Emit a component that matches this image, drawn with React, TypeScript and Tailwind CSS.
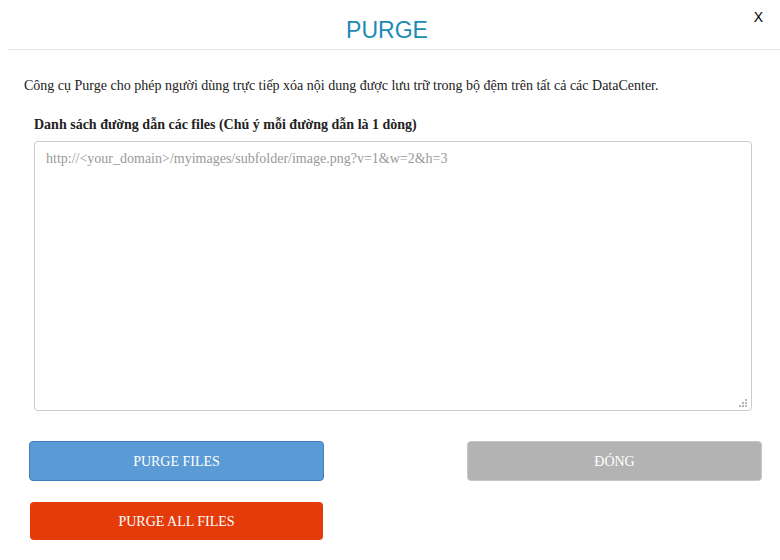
import React from 'react';

function Grip() {
  // dotted resize grip in the textarea corner
  const dots = [
    [6, 0], [6, 3], [3, 3], [6, 6], [3, 6], [0, 6],
  ];
  return (
    <svg className="absolute right-[5px] bottom-[4px] pointer-events-none" width="8" height="8" viewBox="0 0 8 8">
      {dots.map(([x, y], i) => (
        <rect key={i} x={x} y={y} width="2" height="2" fill="#b5b5b5" />
      ))}
    </svg>
  );
}

export default function App() {
  return (
    <div className="relative w-[780px] h-[560px] bg-white font-['Liberation_Serif',serif] text-[#333]">
      {/* header */}
      <div className="relative ml-2 h-[50px] border-b border-[#e5e5e5] flex justify-center pt-[16px]">
        <h2 className="font-['Liberation_Sans',Arial,sans-serif] text-[23px] leading-[28px] text-[#1a8bb5] pr-[14px]">PURGE</h2>
        <button className="absolute right-[17px] top-[8px] font-['Liberation_Sans',Arial,sans-serif] text-[14px] leading-[18px] text-black">
          X
        </button>
      </div>

      {/* body */}
      <div className="pt-[26px]">
        <p className="pl-6 text-[14px] leading-[20px] text-[#222]">
          Công cụ Purge cho phép người dùng trực tiếp xóa nội dung được lưu trữ trong bộ đệm trên tất cả các DataCenter.
        </p>

        <div className="pl-[34px] pr-[28px] mt-[19px]">
          <label className="block text-[14px] leading-[20px] font-bold text-[#222] mb-[6px]">
            Danh sách đường dẫn các files (Chú ý mỗi đường dẫn là 1 dòng)
          </label>
          <div className="relative w-[718px] h-[270px]">
            <textarea
              className="block w-full h-full resize-none border border-[#cccccc] rounded-[4px] px-[11px] py-[7px] text-[14px] leading-[20px] outline-none placeholder:text-[#999]"
              placeholder="http://<your_domain>/myimages/subfolder/image.png?v=1&w=2&h=3"
            />
            <Grip />
          </div>
        </div>

        <div className="flex justify-between pl-[29px] pr-[18px] mt-[30px]">
          <button className="w-[295px] h-[40px] rounded-[4px] border border-[#3f7fbf] bg-[#5b9bd5] text-white text-[14px]">
            PURGE FILES
          </button>
          <button className="w-[295px] h-[40px] rounded-[4px] border border-[#c6c6c6] bg-[#b3b3b3] text-white text-[14px]">
            ĐÓNG
          </button>
        </div>

        <div className="pl-[30px] mt-[21px]">
          <button className="w-[293px] h-[38px] rounded-[4px] bg-[#e53b0b] text-white text-[14px]">
            PURGE ALL FILES
          </button>
        </div>
      </div>
    </div>
  );
}
